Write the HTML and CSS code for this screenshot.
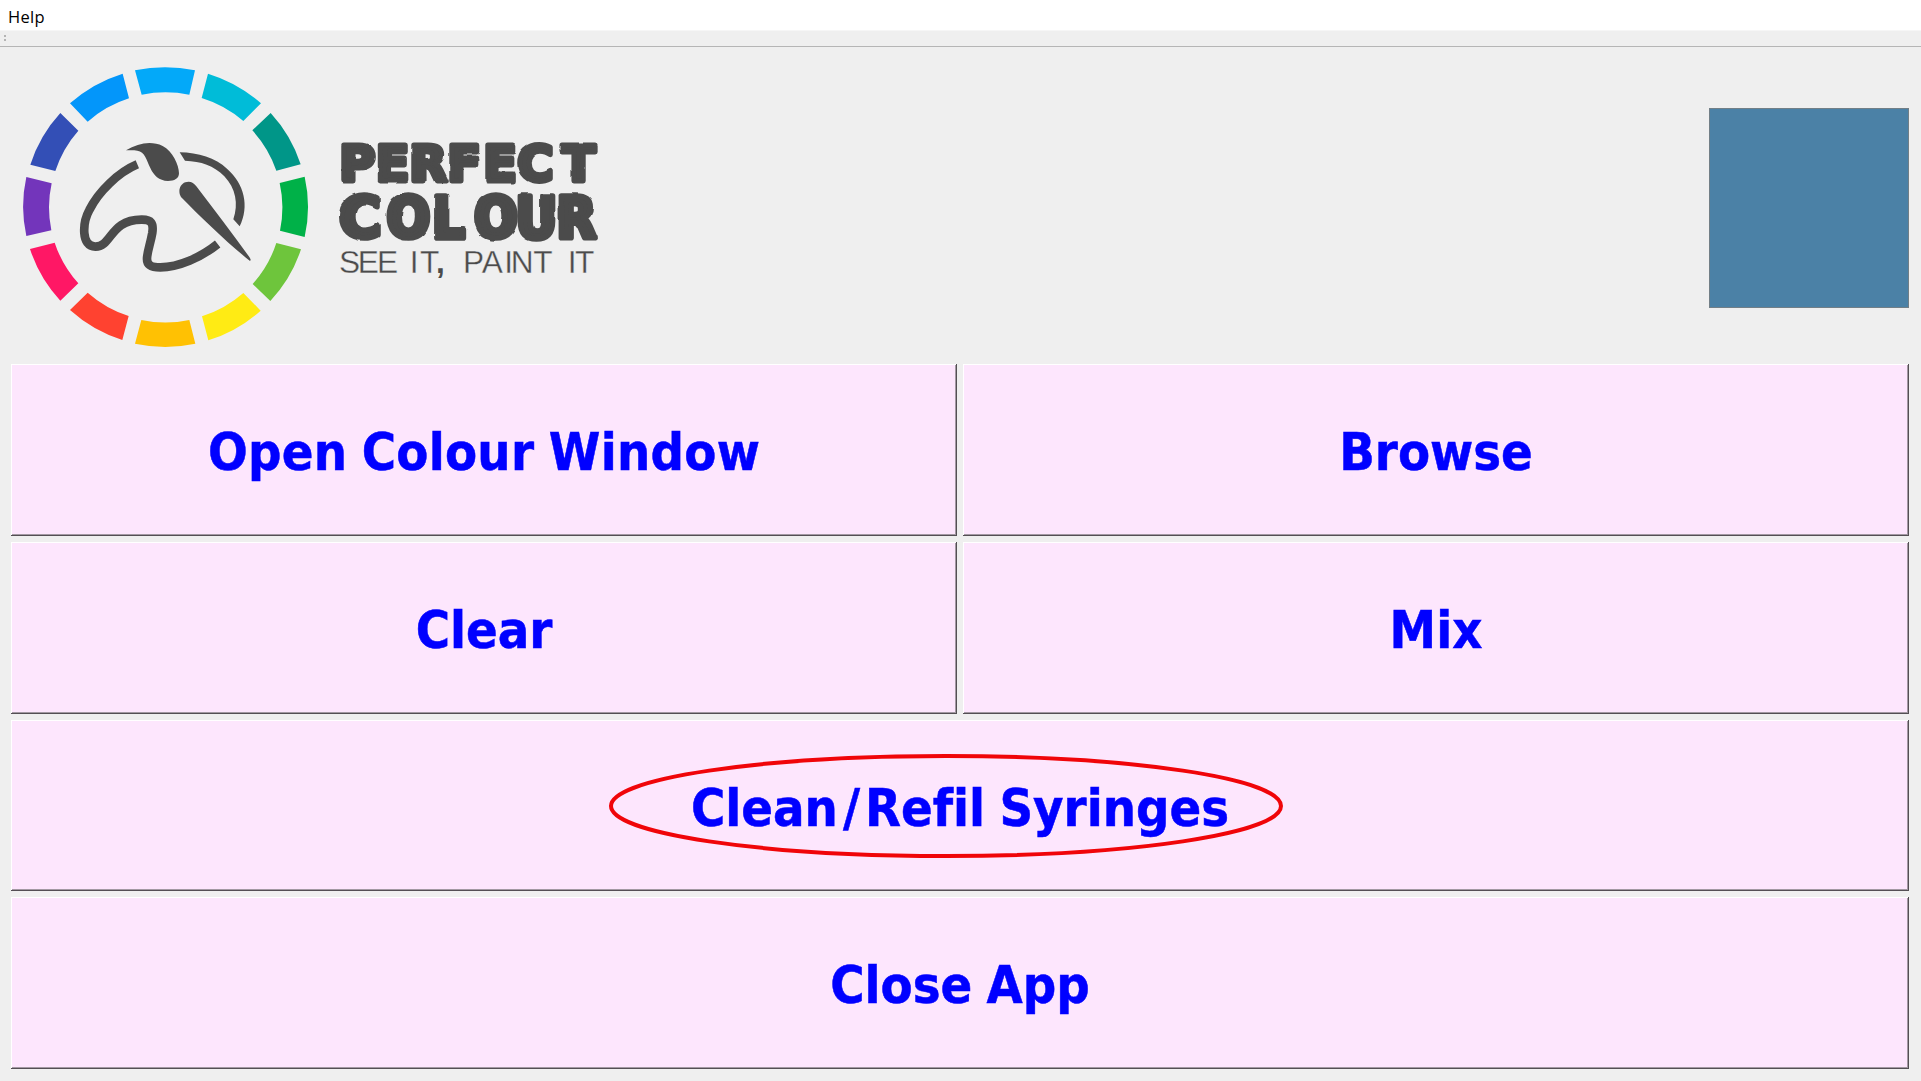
FILE: index.html
```html
<!DOCTYPE html>
<html lang="en">
<head>
<meta charset="utf-8">
<title>Perfect Colour</title>
<link rel="stylesheet" href="styles.css">
</head>
<body>
<nav class="menubar"><span class="menu-item">Help</span></nav>
<div class="toolbar"><span class="grip"></span></div>
<header class="header">
  <svg class="logo" viewBox="0 0 620 310" role="img" aria-label="Perfect Colour">
    <defs>
      <filter id="rough" x="-5%" y="-5%" width="110%" height="110%" color-interpolation-filters="sRGB">
        <feTurbulence type="fractalNoise" baseFrequency="0.03" numOctaves="1" seed="4" result="n"/>
        <feDisplacementMap in="SourceGraphic" in2="n" scale="9" xChannelSelector="R" yChannelSelector="G"/>
      </filter>
    </defs>
    <g transform="translate(10 0) scale(.33333)">
      <path fill="#03a9f9" d="M375 61A427 420 0 0 1 555 61L538 134A347 343 0 0 0 395 134Z"/>
      <path fill="#00bcd8" d="M594 71A427 420 0 0 1 753 160L700 213A347 343 0 0 0 575 144Z"/>
      <path fill="#009688" d="M782 189A427 420 0 0 1 872 343L799 362A347 343 0 0 0 727 241Z"/>
      <path fill="#00b148" d="M884 380A427 420 0 0 1 884 561L810 542A347 343 0 0 0 809 399Z"/>
      <path fill="#6ec53c" d="M873 598A427 420 0 0 1 781 753L728 702A347 343 0 0 0 799 579Z"/>
      <path fill="#ffeb14" d="M752 782A427 420 0 0 1 595 871L576 799A347 343 0 0 0 700 729Z"/>
      <path fill="#ffc103" d="M556 881A427 420 0 0 1 375 881L394 810A347 343 0 0 0 538 810Z"/>
      <path fill="#ff4230" d="M337 870A427 420 0 0 1 180 780L233 728A347 343 0 0 0 356 798Z"/>
      <path fill="#ff1765" d="M151 752A427 420 0 0 1 60 597L134 578A347 343 0 0 0 205 700Z"/>
      <path fill="#7335bb" d="M49 558A427 420 0 0 1 49 381L125 400A347 343 0 0 0 124 541Z"/>
      <path fill="#334fb6" d="M61 344A427 420 0 0 1 151 189L205 242A347 343 0 0 0 136 363Z"/>
      <path fill="#0396fa" d="M180 160A427 420 0 0 1 338 71L357 145A347 343 0 0 0 233 215Z"/>
      <g fill="#4b4b4b">
        <path d="M348 301C385 279 424 272 458 288C488 304 507 345 507 370C507 386 493 393 474 393C447 392 431 376 421 354C409 329 405 305 382 302C370 300 358 301 348 301Z"/>
        <path d="M513 441C503 425 509 403 526 397C540 392 551 398 559 409C613 480 668 552 718 621C723 628 723 633 719 632C650 577 577 506 513 441Z"/>
        <path d="M509 307C565 308 616 323 651 356C703 401 719 469 689 529L670 508C686 462 677 415 643 379C611 346 573 334 525 332Z"/>
      </g>
      <path fill="none" stroke="#4b4b4b" stroke-width="26" stroke-linejoin="round" d="M382 343C325 367 265 425 238 480C217 519 213 590 256 590C306 591 299 508 396 509C424 509 431 519 427 548C421 583 411 606 411 627C411 648 427 652 451 652C505 652 572 623 623 582"/>
    </g>
    <g transform="translate(320 70) scale(.33333)" fill="#4b4b4b">
      <g filter="url(#rough)">
        <text class="brush-line" y="183" x="58 167 268 382 490 592 725">PERFECT</text>
        <text class="brush-line tall" y="353" x="57 200 337 463 587 710"><tspan class="broad">C</tspan>OLOUR</text>
      </g>
      <text class="tagline" y="460" x="57 113 171 230 269 300 348 380 429 485 553 572 640 700 743 765">SEE IT<tspan class="comma">,</tspan> PAINT IT</text>
    </g>
  </svg>
  <div class="swatch"></div>
</header>
<main class="actions">
  <button class="action"><span class="long">Open Colour Window</span></button>
  <button class="action"><span>Browse</span></button>
  <button class="action"><span>Clear</span></button>
  <button class="action"><span>Mix</span></button>
  <button class="action wide"><span>Clean<span class="slash">/</span>Refil Syringes</span>
    <svg class="highlight" viewBox="0 0 676 106"><ellipse cx="338" cy="53" rx="335" ry="50"/></svg>
  </button>
  <button class="action wide"><span>Close App</span></button>
</main>
</body>
</html>
```

FILE: styles.css
```css
* { box-sizing: border-box; }
body {
  margin: 0;
  width: 1921px;
  height: 1081px;
  display: flex;
  flex-direction: column;
  overflow: hidden;
  background: #efefef;
  font-family: "Open Sans", "Noto Sans", sans-serif;
}
.menubar {
  height: 31px;
  padding: 5px 8px 0;
  background: #fff;
  border-bottom: 1px solid #f6f6f6;
  font-size: 16.5px;
  line-height: 23px;
  letter-spacing: .3px;
  color: #000;
}
.toolbar {
  height: 16px;
  border-bottom: 1px solid #b5b5b5;
  padding: 4px;
}
.grip {
  display: block;
  width: 2px;
  height: 6px;
  border-top: 2px solid #b4b4b4;
  border-bottom: 2px solid #b4b4b4;
}
.header {
  height: 317px;
  padding: 3px 12px 0 0;
  display: flex;
  justify-content: space-between;
}
.logo { width: 620px; height: 310px; }
.brush-line {
  font-family: "DejaVu Sans", sans-serif;
  font-size: 148px;
  font-weight: 700;
  stroke: #4b4b4b;
  stroke-width: 15px;
  stroke-linejoin: round;
}
.tall {
  font-family: "DejaVu Sans Condensed", "DejaVu Sans", sans-serif;
  font-size: 170px;
  stroke-width: 17px;
}
.broad { font-family: "DejaVu Sans", sans-serif; }
.tagline {
  font-family: "Liberation Sans", sans-serif;
  font-size: 95px;
  stroke: #efefef;
  stroke-width: 1px;
}
.comma {
  font-weight: 700;
  stroke: none;
}
.swatch {
  width: 200px;
  height: 200px;
  margin-top: 58px;
  background: #4b81a6;
  border: 1px solid #727f87;
}
.actions {
  height: 705px;
  margin: 0 12px 0 11px;
  display: grid;
  grid-template-columns: 1fr 1fr;
  grid-template-rows: 172px 172px 171px 172px;
  gap: 6px;
}
.action {
  position: relative;
  display: flex;
  align-items: center;
  justify-content: center;
  margin: 0;
  padding: 5px 0 0;
  border: 0;
  background: #fde6fd;
  box-shadow: inset -1px -1px #544f54, inset 1px 1px #fff, inset -2px -2px #a399a3;
  font: 700 52px/1.2 "DejaVu Sans Condensed", "DejaVu Sans", sans-serif;
  font-variant-ligatures: none;
  word-spacing: -2px;
  -webkit-text-stroke: .5px #00f;
  color: #00f;
}
.long { letter-spacing: .25px; }
.slash { margin: 0 5px; }
.wide { grid-column: 1 / -1; }
.highlight {
  position: absolute;
  left: 597px;
  top: 33px;
  width: 676px;
  height: 106px;
  fill: none;
  stroke: #f00509;
  stroke-width: 4px;
}
```
